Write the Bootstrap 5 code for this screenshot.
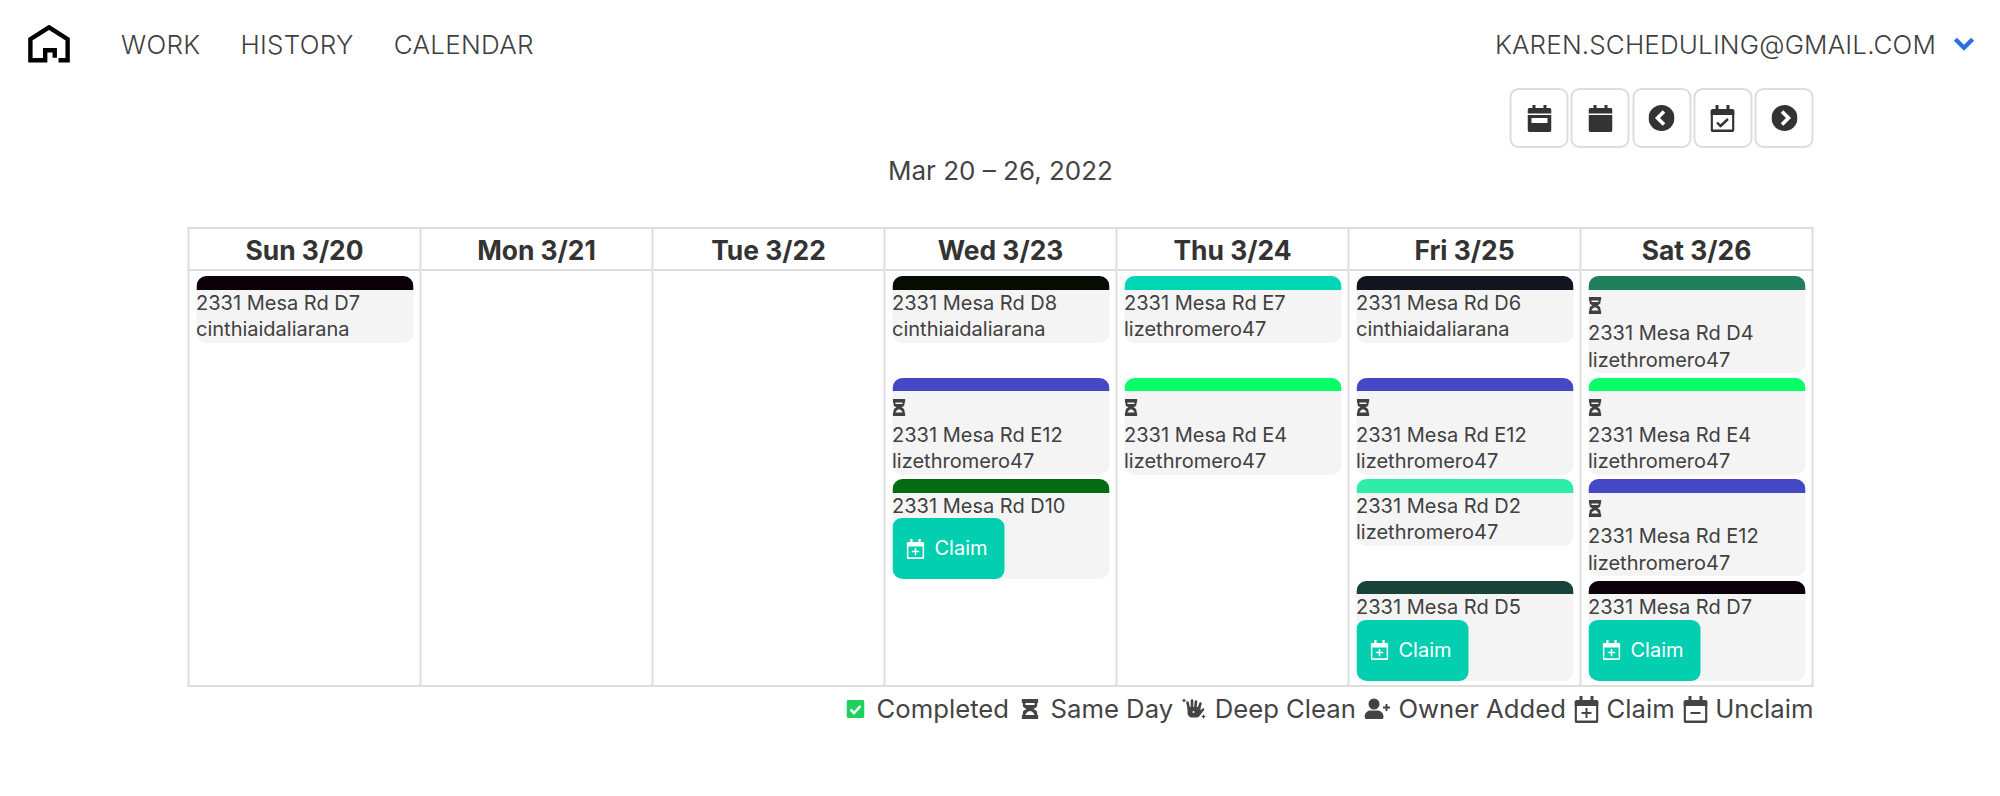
<!DOCTYPE html>
<html lang="en">
<head>
  <meta charset="UTF-8" />
  <meta name="viewport" content="width=device-width, initial-scale=1.0" />
  <title>Calendar</title>
  <link href="https://cdn.jsdelivr.net/npm/bootstrap@5.3.3/dist/css/bootstrap.min.css" rel="stylesheet">
  <style>
    body {
      font-family: Inter, "Liberation Sans", sans-serif;
      color: #444;
      background: #fff;
      overflow: hidden;
    }
    .top-bar { height: 88px; padding: 0 25px 0 28px; }
    .home-link { margin-right: 31px; line-height: 0; }
    .top-link { font-size: 26px; font-weight: 300; letter-spacing: .3px; color: #3f3f3f; text-decoration: none; padding: 0 20px; }
    .user-link { font-size: 26px; font-weight: 300; letter-spacing: .15px; color: #3f3f3f; text-decoration: none; }
    .chev { margin-left: 17px; }
    .sheet { width: 1626px; margin: 0 auto; transform: translateX(.5px); }
    .tool-btn {
      width: 59px; height: 60px; padding: 0; background: #fff;
      border: 2px solid #ddd; border-radius: 9px;
    }
    .tool-row { gap: 2.25px; }
    .range-title { font-size: 26px; line-height: 32px; margin: 5px 0 0; height: 74px; color: #444; font-weight: 400; padding-top: 2px; }
    .cal-table { table-layout: fixed; width: 1626px; margin: 0; border-color: #ddd; border-width: 2px; --bs-table-bg: #fff; }
    .cal-table > * > tr > * { border: 2px solid #ddd; padding: 0; }
    .cal-table > thead > tr > th { height: 42px; font-size: 26.4px; line-height: 34px; font-weight: 700; color: #333; text-align: center; vertical-align: middle; padding-top: 1px; }
    .day-cell { height: 416px; vertical-align: top; padding: 5px 6px 0 6.5px !important; }
    .slot { height: 101.6px; }
    .job-card { background: #f4f4f4; border-radius: 10px; font-size: 20px; line-height: 26.5px; color: #404040; overflow: hidden; }
    .job-bar { height: 13.5px; }
    .job-text { white-space: nowrap; }
    .job-hour { height: 30.5px; display: flex; align-items: center; padding-top: 2px; }
    .claim-btn {
      display: flex; align-items: center; gap: 10.5px; width: 112px; height: 61px;
      padding: 0 0 0 14px; margin-top: -1px; border: 0; border-radius: 9px;
      background: #02cfb0; color: #fff; font-size: 20px;
    }
    .key-row { font-size: 25.7px; line-height: 36px; color: #444; gap: 8.5px; padding-top: 4px; white-space: nowrap; }
    .key-item { display: flex; align-items: center; gap: 8px; }
    .key-wide { gap: 12px; }
    .bar-a { background: #0c000a; } .bar-b { background: #060c02; } .bar-c { background: #4548c5; }
    .bar-d { background: #056b10; } .bar-e { background: #00d6b4; } .bar-f { background: #07ff67; }
    .bar-g { background: #10151f; } .bar-h { background: #2eeda6; } .bar-i { background: #19423a; }
    .bar-j { background: #217f5c; }
  </style>
</head>
<body>

  <!-- icon set -->
  <svg width="0" height="0" class="position-absolute">
    <symbol id="ic-hour" viewBox="0 0 13 15" preserveAspectRatio="none">
      <path fill="currentColor" fill-rule="evenodd" d="M0 0h13v3h-1v1.500c0 1.600-1.200 2.400-3 3 1.800.6 3 1.400 3 3V12h1v3H0v-3h1v-1.500c0-1.600 1.200-2.400 3-3-1.800-.6-3-1.400-3-3V3H0zM3 3v1.500h7V3zM6.500 9C4.500 9.500 3.500 10.500 3 12h7c-.5-1.500-1.500-2.500-3.500-3z"/>
    </symbol>
    <symbol id="ic-cal-add" viewBox="0 0 24 27">
      <path fill="none" stroke="currentColor" stroke-width="2.400" d="M2.200 5.200h19.600a1 1 0 0 1 1 1V24.800a1 1 0 0 1-1 1H2.200a1 1 0 0 1-1-1V6.200a1 1 0 0 1 1-1z"/>
      <path fill="currentColor" d="M0 5h24v5H0zM5 0h3v5H5zM16 0h3v5h-3z"/>
      <path fill="none" stroke="currentColor" stroke-width="2" d="M12 12v10M7 17h10"/>
    </symbol>
    <symbol id="ic-cal-minus" viewBox="0 0 24 27">
      <path fill="none" stroke="currentColor" stroke-width="2.400" d="M2.200 5.200h19.600a1 1 0 0 1 1 1V24.800a1 1 0 0 1-1 1H2.200a1 1 0 0 1-1-1V6.200a1 1 0 0 1 1-1z"/>
      <path fill="currentColor" d="M0 5h24v5H0zM5 0h3v5H5zM16 0h3v5h-3z"/>
      <path fill="none" stroke="currentColor" stroke-width="2" d="M7 17h10"/>
    </symbol>
    <symbol id="ic-cal-band" viewBox="0 0 24 27">
      <path fill="currentColor" fill-rule="evenodd" d="M5 0h3v3h8V0h3v3h3a2 2 0 0 1 2 2v3.500H0V5a2 2 0 0 1 2-2h3zM0 10h24v15a2 2 0 0 1-2 2H2a2 2 0 0 1-2-2zM4 13v5h16v-5z"/>
    </symbol>
    <symbol id="ic-cal-full" viewBox="0 0 24 27">
      <path fill="currentColor" d="M5 0h3v3h8V0h3v3h3a2 2 0 0 1 2 2v3.500H0V5a2 2 0 0 1 2-2h3zM0 10h24v15a2 2 0 0 1-2 2H2a2 2 0 0 1-2-2z"/>
    </symbol>
    <symbol id="ic-cal-check" viewBox="0 0 24 27">
      <path fill="none" stroke="currentColor" stroke-width="2.400" d="M2.200 5.200h19.600a1 1 0 0 1 1 1V24.800a1 1 0 0 1-1 1H2.200a1 1 0 0 1-1-1V6.200a1 1 0 0 1 1-1z"/>
      <path fill="currentColor" d="M0 5h24v5H0zM5 0h3v5H5zM16 0h3v5h-3z"/>
      <path fill="none" stroke="currentColor" stroke-width="2.400" d="M6.500 17.500l3.500 3.500 7.500-7"/>
    </symbol>
    <symbol id="ic-prev" viewBox="0 0 26 26">
      <circle cx="13" cy="13" r="13" fill="currentColor"/>
      <path fill="none" stroke="#fff" stroke-width="3.600" d="M15.500 6.500 9 13l6.500 6.500"/>
    </symbol>
    <symbol id="ic-next" viewBox="0 0 26 26">
      <circle cx="13" cy="13" r="13" fill="currentColor"/>
      <path fill="none" stroke="#fff" stroke-width="3.600" d="M10.500 6.500 17 13l-6.500 6.500"/>
    </symbol>
  </svg>

  <nav class="navbar navbar-expand top-bar">
    <a class="home-link" href="#">
      <svg width="42" height="38" viewBox="0 0 44 39"><path fill="none" stroke="#000" stroke-width="4.600" d="M32 36.500h9.500V14.500L22 2 2.500 14.500V36.500H18V26h10v8"/></svg>
    </a>
    <ul class="navbar-nav me-auto">
      <li class="nav-item"><a class="top-link" href="#">WORK</a></li>
      <li class="nav-item"><a class="top-link" href="#">HISTORY</a></li>
      <li class="nav-item"><a class="top-link" href="#">CALENDAR</a></li>
    </ul>
    <a class="user-link d-flex align-items-center" href="#">KAREN.SCHEDULING@GMAIL.COM
      <svg class="chev" width="22" height="14" viewBox="0 0 20 13"><path fill="none" stroke="#2c6fe0" stroke-width="4" d="M2 2l8 8 8-8"/></svg>
    </a>
  </nav>

  <main class="sheet">
    <div class="d-flex justify-content-end tool-row">
      <button class="tool-btn" type="button"><svg width="24" height="27" color="#333"><use href="#ic-cal-band"/></svg></button>
      <button class="tool-btn" type="button"><svg width="24" height="27" color="#333"><use href="#ic-cal-full"/></svg></button>
      <button class="tool-btn" type="button"><svg width="26" height="26" color="#333"><use href="#ic-prev"/></svg></button>
      <button class="tool-btn" type="button"><svg width="24" height="27" color="#333"><use href="#ic-cal-check"/></svg></button>
      <button class="tool-btn" type="button"><svg width="26" height="26" color="#333"><use href="#ic-next"/></svg></button>
    </div>
    <h2 class="range-title text-center">Mar 20 – 26, 2022</h2>

    <table class="table table-bordered cal-table">
      <thead>
        <tr>
          <th>Sun 3/20</th><th>Mon 3/21</th><th>Tue 3/22</th><th>Wed 3/23</th><th>Thu 3/24</th><th>Fri 3/25</th><th>Sat 3/26</th>
        </tr>
      </thead>
      <tbody>
        <tr>
          <td class="day-cell">
            <div class="slot"><div class="job-card"><div class="job-bar bar-a"></div><div class="job-text">2331 Mesa Rd D7<br>cinthiaidaliarana</div></div></div>
          </td>
          <td class="day-cell"></td>
          <td class="day-cell"></td>
          <td class="day-cell">
            <div class="slot"><div class="job-card"><div class="job-bar bar-b"></div><div class="job-text">2331 Mesa Rd D8<br>cinthiaidaliarana</div></div></div>
            <div class="slot"><div class="job-card"><div class="job-bar bar-c"></div><div class="job-hour"><svg width="13" height="17"><use href="#ic-hour"/></svg></div><div class="job-text">2331 Mesa Rd E12<br>lizethromero47</div></div></div>
            <div class="slot"><div class="job-card"><div class="job-bar bar-d"></div><div class="job-text">2331 Mesa Rd D10</div><button class="claim-btn" type="button"><svg width="18" height="20"><use href="#ic-cal-add"/></svg>Claim</button></div></div>
          </td>
          <td class="day-cell">
            <div class="slot"><div class="job-card"><div class="job-bar bar-e"></div><div class="job-text">2331 Mesa Rd E7<br>lizethromero47</div></div></div>
            <div class="slot"><div class="job-card"><div class="job-bar bar-f"></div><div class="job-hour"><svg width="13" height="17"><use href="#ic-hour"/></svg></div><div class="job-text">2331 Mesa Rd E4<br>lizethromero47</div></div></div>
          </td>
          <td class="day-cell">
            <div class="slot"><div class="job-card"><div class="job-bar bar-g"></div><div class="job-text">2331 Mesa Rd D6<br>cinthiaidaliarana</div></div></div>
            <div class="slot"><div class="job-card"><div class="job-bar bar-c"></div><div class="job-hour"><svg width="13" height="17"><use href="#ic-hour"/></svg></div><div class="job-text">2331 Mesa Rd E12<br>lizethromero47</div></div></div>
            <div class="slot"><div class="job-card"><div class="job-bar bar-h"></div><div class="job-text">2331 Mesa Rd D2<br>lizethromero47</div></div></div>
            <div class="slot"><div class="job-card"><div class="job-bar bar-i"></div><div class="job-text">2331 Mesa Rd D5</div><button class="claim-btn" type="button"><svg width="18" height="20"><use href="#ic-cal-add"/></svg>Claim</button></div></div>
          </td>
          <td class="day-cell">
            <div class="slot"><div class="job-card"><div class="job-bar bar-j"></div><div class="job-hour"><svg width="13" height="17"><use href="#ic-hour"/></svg></div><div class="job-text">2331 Mesa Rd D4<br>lizethromero47</div></div></div>
            <div class="slot"><div class="job-card"><div class="job-bar bar-f"></div><div class="job-hour"><svg width="13" height="17"><use href="#ic-hour"/></svg></div><div class="job-text">2331 Mesa Rd E4<br>lizethromero47</div></div></div>
            <div class="slot"><div class="job-card"><div class="job-bar bar-c"></div><div class="job-hour"><svg width="13" height="17"><use href="#ic-hour"/></svg></div><div class="job-text">2331 Mesa Rd E12<br>lizethromero47</div></div></div>
            <div class="slot"><div class="job-card"><div class="job-bar bar-a"></div><div class="job-text">2331 Mesa Rd D7</div><button class="claim-btn" type="button"><svg width="18" height="20"><use href="#ic-cal-add"/></svg>Claim</button></div></div>
          </td>
        </tr>
      </tbody>
    </table>

    <div class="d-flex justify-content-end key-row">
      <span class="key-item key-wide">
        <svg width="18" height="18" viewBox="0 0 18 18"><rect width="18" height="18" rx="2" fill="#1fd05d"/><path fill="none" stroke="#fff" stroke-width="2.500" d="M4 9.500l3.500 3.500L14 6"/></svg>
        Completed
      </span>
      <span class="key-item key-wide ms-1">
        <svg width="17" height="20" color="#444"><use href="#ic-hour"/></svg>
        Same Day
      </span>
      <span class="key-item">
        <svg width="25" height="22" viewBox="0 0 25 22">
          <g fill="none" stroke="#444" stroke-linecap="round"><path stroke-width="2.600" d="M7.500 11 6 4.500M10.500 10V2.500M13.800 10l.7-6.500M17 11l2-5.500"/></g>
          <path fill="#444" d="M6 9h13v3.500l2-2c1.300-1 2.500.5 1.600 1.600L18 18c-1 1-2 1.500-3.500 1.500H11c-3 0-5-2-5-5z"/>
          <path fill="#444" d="M2.500 0l.7 1.800L5 2.500l-1.800.7L2.500 5l-.7-1.800L0 2.500l1.800-.7zM22 16l.7 1.800 1.800.7-1.800.7-.7 1.800-.7-1.800-1.800-.7 1.800-.7z"/>
          <circle cx="12" cy="14" r="1" fill="#fff"/>
        </svg>
        Deep Clean
      </span>
      <span class="key-item">
        <svg width="26" height="22" viewBox="0 0 26 22"><circle cx="9.500" cy="6" r="5.500" fill="#444"/><path fill="#444" d="M0 19c0-4 3-6.500 6-6.500h7c3 0 6 2.500 6 6.500 0 1.500-1 2-2 2H2c-1 0-2-.5-2-2z"/><path fill="none" stroke="#444" stroke-width="2" d="M22 6v7M18.500 9.500h7"/></svg>
        Owner Added
      </span>
      <span class="key-item">
        <svg width="24" height="27" color="#444"><use href="#ic-cal-add"/></svg>
        Claim
      </span>
      <span class="key-item">
        <svg width="24" height="27" color="#444"><use href="#ic-cal-minus"/></svg>
        Unclaim
      </span>
    </div>
  </main>

  <script src="https://cdn.jsdelivr.net/npm/bootstrap@5.3.3/dist/js/bootstrap.bundle.min.js"></script>
</body>
</html>
